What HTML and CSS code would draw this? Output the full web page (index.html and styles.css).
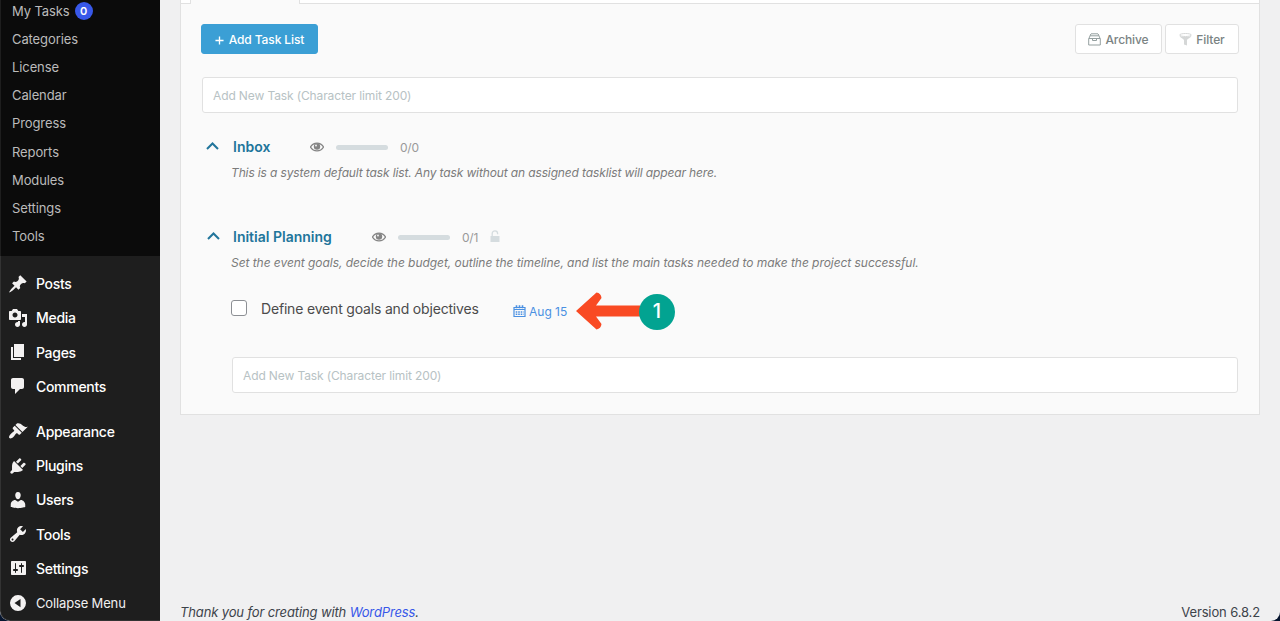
FILE: index.html
```html
<!DOCTYPE html>
<html lang="en">
<head>
    <meta charset="utf-8">
    <title>Task Lists</title>
    <link rel="stylesheet" href="styles.css">
</head>
<body>
    <div class="window">
        <nav class="sidebar">
            <ul class="submenu">
                <li>My Tasks <span class="count">0</span></li>
                <li>Categories</li>
                <li>License</li>
                <li>Calendar</li>
                <li>Progress</li>
                <li>Reports</li>
                <li>Modules</li>
                <li>Settings</li>
                <li>Tools</li>
            </ul>
            <ul class="menu">
                <li><svg viewBox="0 0 20 20"><path d="M10.44 3.02l1.82-1.82 6.36 6.35-1.83 1.82c-1.05-.68-2.48-.57-3.41.36l-.75.75c-.92.93-1.04 2.35-.35 3.41l-1.83 1.82-2.41-2.41-2.8 2.79c-.42.42-3.38 2.71-3.8 2.29s1.86-3.39 2.28-3.81l2.79-2.79L4.1 9.36l1.83-1.82c1.05.69 2.48.57 3.4-.36l.75-.75c.93-.92 1.05-2.35.36-3.41z"/></svg><span>Posts</span></li>
                <li><svg viewBox="0 0 20 20"><path d="M13 11V4c0-.55-.45-1-1-1h-1.67L9 1H5L3.67 3H2c-.55 0-1 .45-1 1v7c0 .55.45 1 1 1h10c.55 0 1-.45 1-1zM7 4.5c1.38 0 2.5 1.12 2.5 2.5S8.38 9.5 7 9.5 4.5 8.38 4.5 7 5.62 4.5 7 4.5zM14 6h5v10.5c0 1.38-1.12 2.5-2.5 2.5S14 17.88 14 16.5s1.12-2.5 2.5-2.5c.17 0 .34.02.5.05V9h-3V6zm-4 8.05V13h2v3.5c0 1.38-1.12 2.5-2.5 2.5S7 17.88 7 16.5 8.12 14 9.5 14c.17 0 .34.02.5.05z"/></svg><span>Media</span></li>
                <li><svg viewBox="0 0 20 20"><path d="M6 15V2h10v13H6zm-1 1h8v2H3V5h2v11z"/></svg><span>Pages</span></li>
                <li><svg viewBox="0 0 20 20"><path d="M5 2h9c1.1 0 2 .9 2 2v7c0 1.1-.9 2-2 2h-2l-5 5v-5H5c-1.1 0-2-.9-2-2V4c0-1.1.9-2 2-2z"/></svg><span>Comments</span></li>
                <li class="separated"><svg viewBox="0 0 20 20"><path d="M14.48 11.06L7.41 3.99l1.5-1.5c.5-.56 2.3-.47 3.51.32 1.21.8 1.43 1.28 2.91 2.1 1.18.64 2.45 1.26 4.45.85zm-.71.71L6.7 4.7 4.93 6.47c-.39.39-.39 1.02 0 1.41l1.06 1.06c.39.39.39 1.03 0 1.42-.6.6-1.43 1.11-2.21 1.69-.35.26-.7.53-1.01.84C1.43 14.23.4 16.08 1.4 17.07c.99 1 2.84-.03 4.18-1.36.31-.31.58-.66.85-1.02.57-.78 1.08-1.61 1.69-2.21.39-.39 1.02-.39 1.41 0l1.06 1.06c.39.39 1.02.39 1.41 0z"/></svg><span>Appearance</span></li>
                <li><svg viewBox="0 0 20 20"><path d="M13.11 4.36L9.87 7.6 8 5.73l3.24-3.24c.35-.34 1.05-.2 1.56.32.52.51.66 1.21.31 1.55zm-8 1.77l.91-1.12 9.01 9.01-1.19.84c-.71.71-2.63 1.16-3.82 1.16H6.14L4.9 17.26c-.59.59-1.54.59-2.12 0-.59-.58-.59-1.53 0-2.12l1.24-1.24v-3.88c0-1.13.4-3.19 1.09-3.89zm7.26 3.97l3.24-3.24c.34-.35 1.04-.21 1.55.31.52.51.66 1.21.31 1.55l-3.24 3.25z"/></svg><span>Plugins</span></li>
                <li><svg viewBox="0 0 20 20"><path d="M10 9.25c-2.27 0-2.73-3.44-2.73-3.44C7 4.02 7.82 2 9.97 2c2.16 0 2.98 2.02 2.71 3.81 0 0-.41 3.44-2.68 3.44zm0 2.57L12.72 10c2.39 0 4.52 2.33 4.52 4.53v2.49s-3.65 1.13-7.24 1.13c-3.65 0-7.24-1.13-7.24-1.13v-2.49c0-2.25 1.94-4.48 4.47-4.48z"/></svg><span>Users</span></li>
                <li><svg viewBox="0 0 20 20"><path d="M16.68 9.77c-1.34 1.34-3.3 1.67-4.95.99l-5.41 6.52c-.99.99-2.59.99-3.58 0s-.99-2.59 0-3.57l6.52-5.42c-.68-1.65-.35-3.61.99-4.95 1.28-1.28 3.12-1.62 4.72-1.06l-2.89 2.89 2.82 2.82 2.86-2.87c.53 1.58.18 3.39-1.08 4.65zM3.81 16.21c.4.39 1.04.39 1.43 0 .4-.4.4-1.04 0-1.43-.39-.4-1.03-.4-1.43 0-.39.39-.39 1.03 0 1.43z"/></svg><span>Tools</span></li>
                <li><svg viewBox="0 0 20 20"><path d="M18 16V4c0-.55-.45-1-1-1H4c-.55 0-1 .45-1 1v12c0 .55.45 1 1 1h13c.55 0 1-.45 1-1zM8 11h1c.55 0 1 .45 1 1s-.45 1-1 1H8v1.5c0 .28-.22.5-.5.5s-.5-.22-.5-.5V13H6c-.55 0-1-.45-1-1s.45-1 1-1h1V5.5c0-.28.22-.5.5-.5s.5.22.5.5V11zm5-2h-1c-.55 0-1-.45-1-1s.45-1 1-1h1V5.5c0-.28.22-.5.5-.5s.5.22.5.5V7h1c.55 0 1 .45 1 1s-.45 1-1 1h-1v5.5c0 .28-.22.5-.5.5s-.5-.22-.5-.5V9z"/></svg><span>Settings</span></li>
                <li class="collapse"><svg viewBox="0 0 20 20"><path fill-rule="evenodd" d="M10 2.1a8 8 0 1 0 0 16 8 8 0 0 0 0-16zM12.500 6v8.200L6.500 10.100z"/></svg><span>Collapse Menu</span></li>
            </ul>
        </nav>

        <div class="content">
            <main class="panel">
                <div class="tabs"><div class="tab"></div></div>
                <div class="toolbar">
                    <button class="btn btn-primary"><svg viewBox="0 0 10 10"><path d="M5 .5v9M.5 5h9"/></svg><span>Add Task List</span></button>
                    <div class="actions">
                        <button class="btn archive">
                            <svg viewBox="0 0 13 13"><path d="M3 .8h7M2.200 2.800h8.600M.7 5.500h11.600v6.500H.7zM1 5.300L2.800 1M12 5.300L10.200 1M4.500 5.500v2h4v-2"/></svg><span>Archive</span>
                        </button>
                        <button class="btn filter">
                            <svg viewBox="0 0 13 13"><ellipse cx="6.500" cy="2" rx="5.900" ry="1.500"/><path d="M.6 2.800C1 5 5 5.500 5 7.500v4l3 1v-5c0-2 4-2.500 4.400-4.700C10.500 4.500 2.500 4.500.6 2.800z"/></svg><span>Filter</span>
                        </button>
                    </div>
                </div>
                <input class="new-task" type="text" placeholder="Add New Task (Character limit 200)">

                <section class="task-list inbox">
                    <div class="list-head">
                        <svg class="chevron" viewBox="0 0 13 8"><path d="M1 7l5.500-5.500L12 7"/></svg>
                        <h2>Inbox</h2>
                        <svg class="eye" viewBox="0 0 14 10"><path d="M.5 5C3.500-.2 10.500-.2 13.500 5 10.500 10.200 3.500 10.200.5 5z"/><circle cx="7" cy="4.500" r="3.200"/><circle class="glint" cx="6" cy="3.500" r=".9"/></svg>
                        <div class="progress"></div>
                        <span class="ratio">0/0</span>
                    </div>
                    <p class="desc">This is a system default task list. Any task without an assigned tasklist will appear here.</p>
                </section>

                <section class="task-list planning">
                    <div class="list-head">
                        <svg class="chevron" viewBox="0 0 13 8"><path d="M1 7l5.500-5.500L12 7"/></svg>
                        <h2>Initial Planning</h2>
                        <svg class="eye" viewBox="0 0 14 10"><path d="M.5 5C3.500-.2 10.500-.2 13.500 5 10.500 10.200 3.500 10.200.5 5z"/><circle cx="7" cy="4.500" r="3.200"/><circle class="glint" cx="6" cy="3.500" r=".9"/></svg>
                        <div class="progress"></div>
                        <span class="ratio">0/1</span>
                        <svg class="lock" viewBox="0 0 10 12"><path d="M.5 6h9v6h-9z"/><path class="shackle" d="M2.200 6V3.500a2.700 2.700 0 0 1 5.400 0v.7"/></svg>
                    </div>
                    <p class="desc">Set the event goals, decide the budget, outline the timeline, and list the main tasks needed to make the project successful.</p>
                    <div class="task">
                        <input class="check" type="checkbox">
                        <span class="task-name">Define event goals and objectives</span>
                        <span class="due">
                            <svg viewBox="0 0 13 12"><path d="M1 2.500h11v9H1zM1 4.500h11"/><path class="rings" d="M3.500.3v3M6.500.3v3M9.500.3v3"/><path class="days" d="M2.700 7h8M2.700 9.300h8"/></svg><span>Aug 15</span>
                        </span>
                    </div>
                    <input class="new-task nested" type="text" placeholder="Add New Task (Character limit 200)">
                </section>
            </main>

            <footer>
                <em>Thank you for creating with <a href="#">WordPress</a>.</em>
                <span class="version">Version 6.8.2</span>
            </footer>
        </div>

        <!-- step marker pointing at the due date -->
        <div class="marker">
            <svg viewBox="0 0 64 38"><path d="M64 13.500H20L25.500 6Q25 1 20.500.5L0 19l20.500 18.500Q25 36.500 25.500 32L20 24.500H64z"/></svg>
            <span class="step">1</span>
        </div>
    </div>
</body>
</html>
```

FILE: styles.css
```css
* {
    box-sizing: border-box;
}

html {
    background-color: #06152f;
}

body {
    margin: 0;
    font-family: Inter, sans-serif;
    font-size: 13px;
    color: #3c434a;
}

ul, h2, p {
    margin: 0;
    padding: 0;
    list-style: none;
}

.window {
    position: relative;
    display: flex;
    height: 621px;
    overflow: hidden;
    background-color: #f0f0f1;
    border-radius: 0 0 9px 10px;
}

/* Sidebar */
.sidebar {
    width: 160px;
    background-color: #1e1e1e;
    border-left: 1px solid #333;
    border-bottom: 1px solid #333;
    border-bottom-left-radius: 10px;
}

.submenu {
    height: 256px;
    margin-left: -1px;
    border-left: 1px solid #1e1e1e;
    background-color: #0b0b0b;
    color: #bbb;
}

.submenu li {
    display: flex;
    align-items: center;
    height: 28.2px;
    padding-left: 11px;
    letter-spacing: -0.1px;
}

.submenu li:first-child {
    height: 24.8px;
    padding-bottom: 2px;
}

.count {
    width: 18px;
    height: 18px;
    margin-left: 5px;
    border-radius: 50%;
    background-color: #3858e9;
    color: #fff;
    font-size: 11px;
    font-weight: 600;
    line-height: 18px;
    text-align: center;
}

.menu {
    padding-top: 10.5px;
}

.menu li {
    display: flex;
    align-items: center;
    gap: 8px;
    height: 34.25px;
    padding-left: 7px;
    color: #fff;
    font-size: 14px;
    font-weight: 500;
    letter-spacing: -0.3px;
}

.menu svg {
    width: 20px;
    height: 20px;
    fill: #f3f1f1;
}

.menu .separated {
    margin-top: 10.8px;
}

.menu .collapse {
    height: 34px;
    color: #f0f0f1;
    font-size: 13px;
    font-weight: 400;
    letter-spacing: -0.15px;
}

/* Content */
.content {
    flex: 1;
    display: flex;
    flex-direction: column;
    justify-content: space-between;
    padding: 0 20px;
}

.panel {
    height: 415px;
    border: 1px solid #e1e1e1;
    border-top: none;
    background-color: #fafafa;
}

.tabs {
    height: 4px;
    padding-left: 9px;
    background-color: #fff;
    border-bottom: 1px solid #e1e1e1;
}

.tab {
    width: 110px;
    height: 4px;
    background-color: #fafafa;
    border: 1px solid #e1e1e1;
    border-width: 0 1px;
}

.toolbar {
    display: flex;
    justify-content: space-between;
    padding: 20px 20px 0;
}

.actions {
    display: flex;
    gap: 3px;
}

.btn {
    display: flex;
    align-items: center;
    justify-content: center;
    gap: 4px;
    height: 30px;
    padding: 0;
    border: 1px solid #e1e1e1;
    border-radius: 3px;
    background-color: #fff;
    color: #7a8383;
    font-family: inherit;
    font-size: 12px;
    font-weight: 500;
    letter-spacing: -0.1px;
}

.btn svg {
    width: 13px;
    height: 13px;
}

.btn-primary {
    width: 117px;
    gap: 5px;
    border-color: #3b9fd5;
    background-color: #3b9fd5;
    color: #fff;
}

.btn-primary svg {
    width: 9px;
    height: 9px;
    margin-top: 2px;
    stroke: #fff;
    stroke-width: 1.5;
}

.archive {
    width: 87px;
}

.archive svg {
    fill: none;
    stroke: #95a0a0;
}

.filter {
    width: 74px;
}

.filter svg {
    fill: #d5d7d7;
}

.filter ellipse {
    fill: #fff;
    stroke: #d5d7d7;
}

.new-task {
    display: block;
    width: 1036px;
    height: 36px;
    margin: 23px 0 0 21px;
    padding: 0 10px;
    border: 1px solid #e1e1e1;
    border-radius: 3px;
    background-color: #fff;
    font-family: inherit;
    font-size: 12px;
    letter-spacing: -0.12px;
}

.new-task::placeholder {
    color: #b7c2c4;
}

.task-list {
    padding-left: 25px;
}

.inbox {
    padding-top: 24px;
}

.planning {
    padding-top: 45px;
}

.list-head {
    display: flex;
    align-items: center;
    height: 20px;
}

.list-head h2 {
    width: 37px;
    margin: -1px 40px 0 14px;
    color: #21759b;
    font-size: 14px;
    font-weight: 600;
    line-height: 17px;
    letter-spacing: 0;
    white-space: nowrap;
}

.planning .list-head h2 {
    width: 99px;
    margin-left: 13px;
}

.chevron {
    width: 13px;
    height: 8px;
    margin-top: -2px;
    fill: none;
    stroke: #21759b;
    stroke-width: 2;
}

.planning .chevron {
    margin-left: 1px;
}

.eye {
    width: 14px;
    height: 10px;
    fill: none;
    stroke: #858585;
    stroke-width: 1.3;
}

.eye circle {
    fill: #858585;
    stroke: none;
}

.eye .glint {
    fill: #fafafa;
}

.progress {
    width: 52px;
    height: 5px;
    margin: 1px 12px 0 12px;
    border-radius: 3px;
    background-color: #d5dcdf;
}

.ratio {
    color: #999;
    font-size: 12px;
    letter-spacing: -0.2px;
}

.lock {
    width: 10px;
    height: 12px;
    margin: -2px 0 0 12px;
    fill: #d5dcdf;
}

.shackle {
    fill: none;
    stroke: #d5dcdf;
    stroke-width: 1.3;
}

.desc {
    margin: 7px 0 0 25px;
    color: #7b7b7b;
    font-size: 12px;
    font-style: italic;
    line-height: 18px;
    letter-spacing: -0.05px;
}

.inbox .desc {
    letter-spacing: -0.13px;
}

.task {
    display: flex;
    align-items: center;
    height: 20px;
    margin: 26px 0 0 25px;
}

.check {
    appearance: none;
    width: 16px;
    height: 16px;
    margin: 0 14px 0 0;
    border: 1px solid #8c8f94;
    border-radius: 3px;
    background-color: #fff;
}

.task-name {
    width: 218px;
    color: #4b4b4b;
    font-size: 14px;
    line-height: 17px;
    letter-spacing: -0.18px;
    white-space: nowrap;
}

.due {
    display: flex;
    align-items: center;
    gap: 3px;
    margin: 6px 0 0 34px;
    color: #4a90e2;
    font-size: 12px;
}

.due svg {
    width: 13px;
    height: 12px;
    fill: none;
    stroke: #4a90e2;
    stroke-width: 1.2;
}

.due .rings {
    stroke-width: 1.6;
}

.due .days {
    stroke-width: 1.6;
    stroke-dasharray: 1.6 0.9;
}

.nested {
    width: 1006px;
    margin: 39px 0 0 26px;
}

footer {
    display: flex;
    justify-content: space-between;
    line-height: 17px;
    letter-spacing: -0.13px;
}

footer a {
    color: #3858e9;
    text-decoration: none;
}

/* Step marker */
.marker {
    position: absolute;
    top: 292px;
    left: 576px;
    display: flex;
    align-items: center;
}

.marker svg {
    width: 64px;
    height: 38px;
    fill: #f94a23;
}

.step {
    width: 36px;
    height: 36px;
    margin: 1px 0 0 -1px;
    border-radius: 50%;
    background-color: #02a391;
    color: #fff;
    font-size: 20px;
    font-weight: 500;
    line-height: 35px;
    text-align: center;
}
```
